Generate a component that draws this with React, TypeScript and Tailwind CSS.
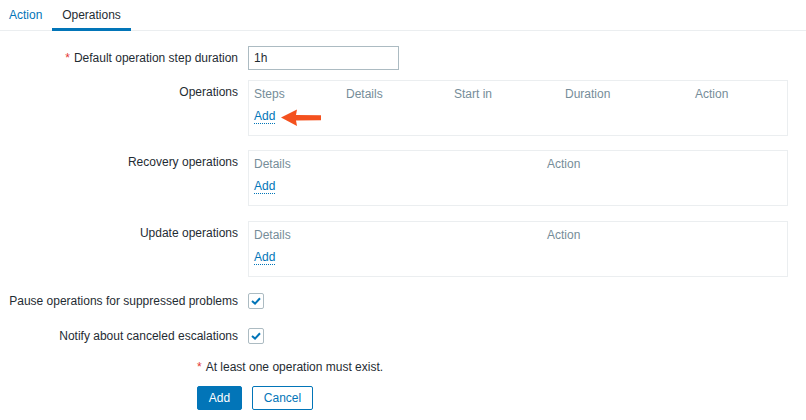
import React from "react";

const Star = () => <span className="text-[#e33734] mr-[4px]">*</span>;

const AddLink = () => (
  <a className="text-[#0275b8] border-b border-dotted border-[#0275b8] leading-[13px] inline-block cursor-pointer">Add</a>
);

function Label({ children, pt = "pt-[4px]" }: { children: React.ReactNode; pt?: string }) {
  return <div className={`w-[238px] shrink-0 text-right pr-[0px] ${pt} leading-[14px]`}>{children}</div>;
}

function Box({ cols, arrow }: { cols: { name: string; w?: string }[]; arrow?: boolean }) {
  return (
    <div className="relative w-[540px] h-[56px] border border-[#ebeef0] pl-[5px] pt-[6px]">
      <div className="flex text-[#768d99] leading-[14px]">
        {cols.map((c) => (
          <div key={c.name} className={c.w ?? "flex-1"}>
            {c.name}
          </div>
        ))}
      </div>
      <div className="mt-[8px] leading-[14px]">
        <AddLink />
      </div>
      {arrow && (
        <svg className="absolute left-[32px] top-[28px]" width="41" height="18" viewBox="0 0 41 18">
          <path
            d="M0 8.5 L16 0.5 L15 6 L40 6.2 L40 11.3 L15 11.5 L16 17 Z"
            fill="#f4511e"
          />
        </svg>
      )}
    </div>
  );
}

const Check = () => (
  <div className="w-[16px] h-[16px] border border-[#acbbc2] rounded-[2px] flex items-center justify-center bg-white">
    <svg width="10" height="8" viewBox="0 0 10 8">
      <path d="M1 4 L4 6.6 L9 1.2" fill="none" stroke="#0275b8" strokeWidth="2" />
    </svg>
  </div>
);

export default function App() {
  return (
    <div
      className="w-[806px] h-[420px] bg-white text-[12px] text-[#1f2c33] overflow-hidden"
      style={{ fontFamily: '"Liberation Sans", Arial, sans-serif' }}
    >
      <div className="flex items-start h-[31px] border-b border-[#ebeef0]">
        <div className="w-[52px] h-[31px] pl-[9px] pt-[8px] leading-[14px] text-[#0275b8]">Action</div>
        <div className="w-[79px] h-[31px] text-center pt-[8px] leading-[14px] border-b-[3px] border-[#0275b8]">
          Operations
        </div>
      </div>

      <div className="flex flex-col pt-[15px]">
        <div className="flex gap-[10px]">
          <Label pt="pt-[5px]">
            <Star />
            Default operation step duration
          </Label>
          <div className="w-[151px] h-[24px] border border-[#acbbc2] px-[5px] leading-[22px]">1h</div>
        </div>

        <div className="flex gap-[10px] mt-[10px]">
          <Label pt="pt-[5px]">Operations</Label>
          <Box
            arrow
            cols={[
              { name: "Steps", w: "w-[92px]" },
              { name: "Details", w: "w-[108px]" },
              { name: "Start in", w: "w-[111px]" },
              { name: "Duration", w: "w-[130px]" },
              { name: "Action" },
            ]}
          />
        </div>

        <div className="flex gap-[10px] mt-[14px]">
          <Label pt="pt-[5px]">Recovery operations</Label>
          <Box cols={[{ name: "Details", w: "w-[293px]" }, { name: "Action" }]} />
        </div>

        <div className="flex gap-[10px] mt-[15px]">
          <Label pt="pt-[5px]">Update operations</Label>
          <Box cols={[{ name: "Details", w: "w-[293px]" }, { name: "Action" }]} />
        </div>

        <div className="flex gap-[10px] mt-[12px] items-center h-[24px]">
          <Label pt="pt-0">Pause operations for suppressed problems</Label>
          <Check />
        </div>

        <div className="flex gap-[10px] mt-[11px] items-center h-[24px]">
          <Label pt="pt-0">Notify about canceled escalations</Label>
          <Check />
        </div>

        <div className="pl-[197px] mt-[12px] leading-[14px]">
          <Star />
          At least one operation must exist.
        </div>

        <div className="pl-[197px] mt-[12px] flex gap-[10px]">
          <button className="h-[24px] w-[45px] bg-[#0275b8] text-white rounded-[2px] border border-[#0275b8] leading-[22px]">
            Add
          </button>
          <button className="h-[24px] w-[61px] bg-white text-[#0275b8] rounded-[2px] border border-[#0275b8] leading-[22px]">
            Cancel
          </button>
        </div>
      </div>
    </div>
  );
}
